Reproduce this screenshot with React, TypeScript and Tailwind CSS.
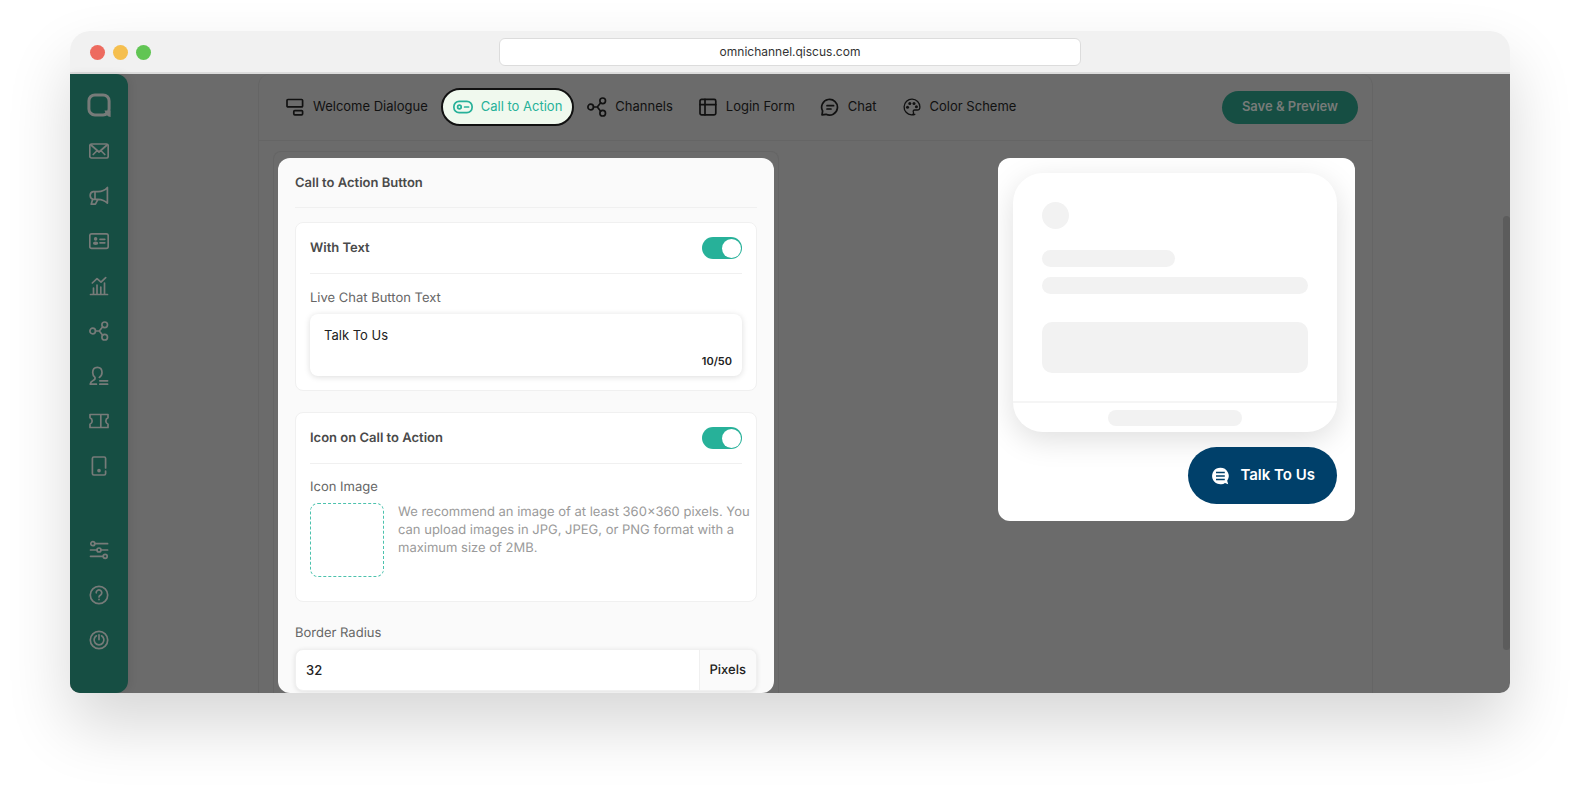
import { useState } from "react";
import type { ReactNode } from "react";

function Icon({ children }: { children: ReactNode }) {
  return (
    <svg
      width="20"
      height="20"
      viewBox="0 0 20 20"
      fill="none"
      stroke="currentColor"
      strokeWidth="1.7"
      strokeLinecap="round"
      strokeLinejoin="round"
      aria-hidden="true"
      className="shrink-0"
    >
      {children}
    </svg>
  );
}

const channelsShape = (
  <>
    <circle cx="3.7" cy="10" r="2.8" />
    <circle cx="15.7" cy="3.8" r="2.8" />
    <circle cx="15.7" cy="16.2" r="2.8" />
    <path d="M6.5 10h3.8M13.7 5.8 10.3 10l3.4 4.2" />
  </>
);

const topLinks = [
  {
    name: "Inbox",
    icon: (
      <>
        <rect x="0.8" y="3" width="18.4" height="14" rx="1.8" />
        <path d="m2 4 8 7 8-7M4.2 13.5l3-3M15.8 13.5l-3-3" />
      </>
    ),
  },
  {
    name: "Broadcast",
    icon: (
      <path d="M18.4 1.5v15.6c-2.4-2.4-5.3-3.6-9.4-3.8H4.2a3.9 3.9 0 0 1 0-7.6H9c4-.1 7-1.4 9.4-4.2ZM6 5.8v7.4M3.6 13.4l-1.4 4.8h4.2l2.4-4.6" />
    ),
  },
  {
    name: "Customers",
    icon: (
      <>
        <rect x="0.8" y="2.8" width="18.4" height="14.6" rx="1.8" />
        <path d="M11 8.3h4.8M11 11.8h4.8" />
        <circle cx="6.6" cy="7.9" r="1.8" fill="currentColor" stroke="none" />
        <ellipse cx="6.6" cy="12.2" rx="2.7" ry="1.7" fill="currentColor" stroke="none" />
      </>
    ),
  },
  {
    name: "Analytics",
    icon: <path d="M1.5 18.5h17M4.5 18v-6M8 18V9M11.8 18v-7M15.5 18V7M3.3 7 8 2.6l4 3.6 4.7-4.6" />,
  },
  { name: "Integration", icon: channelsShape },
  {
    name: "Agents",
    icon: (
      <path d="M10.3 11.4A5.6 5.6 0 0 0 13 6.6C13 3.4 11.2 1.4 8.4 1.4S3.7 3.4 3.7 6.6c0 2 .8 3.7 2.3 4.8.4 1.6-.3 2.4-1.9 3.1-1.7.7-2.6 1.5-2.9 3.7h6.2M10.8 14.8h7.8M10.8 18.2h7.8" />
    ),
  },
  {
    name: "Tickets",
    icon: (
      <path d="M1 3.5h18v3.2a3.6 3.6 0 0 0 0 6.6v3.2H1v-3.2a3.6 3.6 0 0 0 0-6.6V3.5ZM11.8 3.5v13" />
    ),
  },
  {
    name: "Devices",
    icon: (
      <>
        <path d="M16.6 12V2.4c0-.9-.5-1.4-1.4-1.4H4.8c-.9 0-1.4.5-1.4 1.4v15.2c0 .9.5 1.4 1.4 1.4h10.4c.9 0 1.4-.5 1.4-1.4V15" />
        <circle cx="10" cy="14.6" r="1" fill="currentColor" />
      </>
    ),
  },
];

const bottomLinks = [
  {
    name: "Settings",
    icon: (
      <>
        <circle cx="3.8" cy="3.7" r="2" />
        <circle cx="10" cy="10" r="2" />
        <circle cx="16.2" cy="16.3" r="2" />
        <path d="M6 3.7h12.6M1.5 10H8M12 10h6.6M1.5 16.3H14" />
      </>
    ),
  },
  {
    name: "Help",
    icon: (
      <>
        <circle cx="10" cy="10" r="8.7" />
        <path d="M7.2 7.8A2.8 2.8 0 1 1 11.6 10c-1 .6-1.6 1-1.6 2M10 14.4v.2" />
      </>
    ),
  },
  {
    name: "Log out",
    icon: (
      <>
        <circle cx="10" cy="10" r="8.7" />
        <path d="M7.4 5.8a4.9 4.9 0 1 0 5.2 0M10 4.8v4.8" />
      </>
    ),
  },
];

const tabs = [
  {
    name: "Welcome Dialogue",
    icon: (
      <>
        <rect x="2" y="2.5" width="15.6" height="7.4" rx="1" />
        <rect x="8.8" y="13.6" width="8.8" height="4.2" rx="1" />
      </>
    ),
  },
  {
    name: "Call to Action",
    icon: (
      <>
        <rect x="0.9" y="4.3" width="18.2" height="11.4" rx="5.2" />
        <circle cx="6.4" cy="10" r="1.8" />
        <path d="M11.6 10h4" />
      </>
    ),
  },
  { name: "Channels", icon: channelsShape },
  {
    name: "Login Form",
    icon: (
      <>
        <rect x="2" y="2.4" width="15.8" height="15.4" rx="1.6" />
        <path d="M7 2.4v15.4M2 7.6h15.8" />
      </>
    ),
  },
  {
    name: "Chat",
    icon: <path d="M2 17.8 2.6 14A7.9 7.9 0 1 1 6 17.3l-4 .5ZM7 8.7h6.6M7 12h4" />,
  },
  {
    name: "Color Scheme",
    icon: (
      <>
        <path
          strokeWidth={1.3}
          d="M12.8 17.3c-1 .5-2.2.7-3.3.6A7.9 7.9 0 1 1 17.9 10c0 2.3-1.2 3.1-2.9 3h-2.2c-1.6 0-1.9 1.2-1.4 2.2.4.8.1 2.5-1.9 2.7"
        />
        <circle cx="5.5" cy="10.2" r="1.5" fill="currentColor" stroke="none" />
        <circle cx="7.8" cy="6.6" r="1.5" fill="currentColor" stroke="none" />
        <circle cx="12" cy="6.6" r="1.5" fill="currentColor" stroke="none" />
        <circle cx="14.4" cy="9.8" r="1.5" fill="currentColor" stroke="none" />
      </>
    ),
  },
];

function Toggle({ id, checked, onChange }: { id: string; checked: boolean; onChange: (v: boolean) => void }) {
  return (
    <input
      id={id}
      type="checkbox"
      role="switch"
      checked={checked}
      onChange={(e) => onChange(e.target.checked)}
      className="flex h-[22px] w-10 cursor-pointer appearance-none items-center rounded-full bg-gray-300 px-px before:block before:size-[19px] before:rounded-full before:bg-white before:transition checked:bg-[#27b199] checked:before:translate-x-[19px]"
    />
  );
}

function Sidebar() {
  return (
    <aside className="flex w-[58px] shrink-0 flex-col items-center rounded-r-xl bg-[#164e43] pt-[18px] pb-[43px] text-[#777b79] shadow-[2px_0_8px_rgba(0,0,0,0.08)]">
      <a href="#home" aria-label="Home" className="mb-[23px]">
        <svg width="26" height="26" viewBox="0 0 26 26" fill="none" stroke="currentColor" strokeWidth="3" aria-hidden="true">
          <rect x="2.9" y="2.9" width="20.2" height="20" rx="6" />
          <path d="M18.5 18.5h6.1v6.6c-3-.4-5-2.6-6.1-6.600Z" fill="currentColor" stroke="none" />
        </svg>
      </a>
      <nav className="flex grow flex-col gap-[25px]">
        {topLinks.map((l) => (
          <a key={l.name} href="#" aria-label={l.name}>
            <Icon>{l.icon}</Icon>
          </a>
        ))}
      </nav>
      <nav className="flex flex-col gap-[25px]">
        {bottomLinks.map((l) => (
          <a key={l.name} href="#" aria-label={l.name}>
            <Icon>{l.icon}</Icon>
          </a>
        ))}
      </nav>
    </aside>
  );
}

function Header() {
  return (
    <header className="flex h-[67px] items-center justify-between border-b border-[#656565] px-3.5">
      <nav className="flex gap-px">
        {tabs.map((t) => (
          <button
            key={t.name}
            type="button"
            className={
              t.name === "Call to Action"
                ? "flex h-[38px] items-center gap-2 rounded-full border-2 border-[#111] bg-[#f0f9ee] px-2.5 text-[13px] text-[#27b199]"
                : "flex h-[38px] items-center gap-2 px-3 text-[13px] text-[#111]"
            }
          >
            <Icon>{t.icon}</Icon>
            {t.name}
          </button>
        ))}
      </nav>
      <button type="button" className="h-[33px] rounded-full bg-[#164e43] px-5 text-[13px] font-semibold text-[#777b79]">
        Save &amp; Preview
      </button>
    </header>
  );
}

function SettingsCard() {
  const [withText, setWithText] = useState(true);
  const [withIcon, setWithIcon] = useState(true);
  const [text, setText] = useState("Talk To Us");
  const [radius, setRadius] = useState("32");

  return (
    <section className="w-[496px] rounded-xl bg-[#fafafa] px-[17px] pb-0.5 text-[13px] leading-5 text-[#666]">
      <h2 className="border-b border-[#f0f0f0] pt-[15px] pb-3.5 font-semibold text-[#4a4a4a]">Call to Action Button</h2>

      {/* button text */}
      <div className="mt-3.5 rounded-lg border border-[#f0f0f0] bg-white px-3.5 pb-3.5">
        <div className="flex h-[51px] items-center justify-between border-b border-[#f0f0f0]">
          <label htmlFor="with-text" className="font-semibold text-[#4a4a4a]">With Text</label>
          <Toggle id="with-text" checked={withText} onChange={setWithText} />
        </div>
        <label htmlFor="button-text" className="mt-3.5 block">Live Chat Button Text</label>
        <div className="mt-1.5 flex h-[62px] flex-col rounded-lg bg-white px-3.5 pt-[11px] shadow-[0_1px_6px_rgba(0,0,0,0.14)]">
          <input
            id="button-text"
            value={text}
            maxLength={50}
            onChange={(e) => setText(e.target.value)}
            className="h-5 w-full text-[#222] outline-none"
          />
          <span className="-mr-1 mt-2 self-end text-[11px] leading-4 font-semibold text-[#222]">{text.length}/50</span>
        </div>
      </div>

      {/* button icon */}
      <div className="mt-[21px] rounded-lg border border-[#f0f0f0] bg-white px-3.5 pb-6">
        <div className="flex h-[51px] items-center justify-between border-b border-[#f0f0f0]">
          <label htmlFor="with-icon" className="font-semibold text-[#4a4a4a]">Icon on Call to Action</label>
          <Toggle id="with-icon" checked={withIcon} onChange={setWithIcon} />
        </div>
        <p className="mt-[13px]">Icon Image</p>
        <div className="-mr-2.5 mt-1.5 flex gap-3.5">
          <button
            type="button"
            aria-label="Upload icon image"
            className="size-[74px] shrink-0 rounded-lg border border-dashed border-[#4cc2ad]"
          />
          <p className="leading-[18px] text-[#9a9a9a]">
            We recommend an image of at least 360×360 pixels. You can upload images in JPG, JPEG, or PNG format with a
            maximum size of 2MB.
          </p>
        </div>
      </div>

      {/* border radius */}
      <label htmlFor="border-radius" className="mt-[21px] block">Border Radius</label>
      <div className="mt-1.5 flex h-[42px] overflow-hidden rounded-lg border border-[#f0f0f0] bg-white text-[#222] shadow-[0_1px_5px_rgba(0,0,0,0.1)]">
        <input
          id="border-radius"
          value={radius}
          onChange={(e) => setRadius(e.target.value)}
          className="min-w-0 grow px-2.5 font-medium outline-none"
        />
        <span className="flex items-center border-l border-[#f0f0f0] bg-[#fafafa] px-2.5 font-medium">Pixels</span>
      </div>
    </section>
  );
}

function Preview() {
  return (
    <section className="flex w-[357px] flex-col overflow-hidden rounded-xl bg-white pt-[15px] pr-[18px] pb-[17px] pl-[15px]">
      <div className="rounded-[30px] bg-white shadow-[0_8px_30px_rgba(0,0,0,0.13)]">
        <div className="px-[29px] pt-[29px] pb-7">
          <div className="size-[27px] rounded-full bg-[#f2f2f2]" />
          <div className="mt-[21px] h-[17px] w-1/2 rounded-full bg-[#f2f2f2]" />
          <div className="mt-2.5 h-[17px] rounded-full bg-[#f2f2f2]" />
          <div className="mt-7 h-[51px] rounded-[10px] bg-[#f2f2f2]" />
        </div>
        <div className="flex h-[31px] items-center justify-center border-t-2 border-[#f5f5f5]">
          <div className="h-4 w-[134px] rounded-full bg-[#f2f2f2]" />
        </div>
      </div>
      <button
        type="button"
        className="mt-[15px] flex h-[57px] items-center gap-2.5 self-end rounded-full bg-[#00406a] px-[22px] text-[15px] font-semibold text-white"
      >
        <svg width="20" height="20" viewBox="0 0 20 20" aria-hidden="true">
          <path d="M10.300 1.700a8.300 8.300 0 1 0 4.700 15.200l3.200 1.400-1-3.500A8.300 8.300 0 0 0 10.300 1.700Z" fill="currentColor" />
          <path d="M6 6.500h8.800M6 10h8.800M6 13.500h8.800" stroke="#00406a" strokeWidth="1.300" />
        </svg>
        Talk To Us
      </button>
    </section>
  );
}

export default function App() {
  return (
    <div className="bg-white px-[70px] pt-[31px] pb-[109px] font-['Inter',sans-serif] [text-rendering:geometricPrecision]">
      <div className="overflow-hidden rounded-t-[20px] rounded-b-[10px] shadow-[0_32px_64px_rgba(0,0,0,0.16)]">
        {/* browser bar */}
        <div className="grid h-[43px] grid-cols-[1fr_582px_1fr] items-center border-b-2 border-[#dcdcdc] bg-[#f1f1f1]">
          <div className="flex gap-2 pt-0.5 pl-5">
            <span className="size-[15px] rounded-full bg-[#ed6b5f]" />
            <span className="size-[15px] rounded-full bg-[#f5bf4f]" />
            <span className="size-[15px] rounded-full bg-[#61c554]" />
          </div>
          <input
            aria-label="Address"
            readOnly
            value="omnichannel.qiscus.com"
            className="h-7 rounded-md border border-[#dcdcdc] bg-white text-center text-xs text-[#333] outline-none"
          />
        </div>

        <div className="flex bg-[#6b6b6b]">
          <Sidebar />
          <main className="grow px-[130px]">
            <div className="h-full rounded-t-xl border-x border-[#656565]">
              <Header />
              <div className="flex items-start justify-between pt-2.5 pr-[17px] pl-3.5">
                <div className="rounded-t-lg border border-b-0 border-[#656565] px-1 pt-1.5">
                  <SettingsCard />
                </div>
                <div className="pt-[7px]">
                  <Preview />
                </div>
              </div>
            </div>
          </main>
          <div className="w-[7px] pt-[142px]">
            <div className="h-[434px] rounded-full bg-[#5c5c5c]" />
          </div>
        </div>
      </div>
    </div>
  );
}
